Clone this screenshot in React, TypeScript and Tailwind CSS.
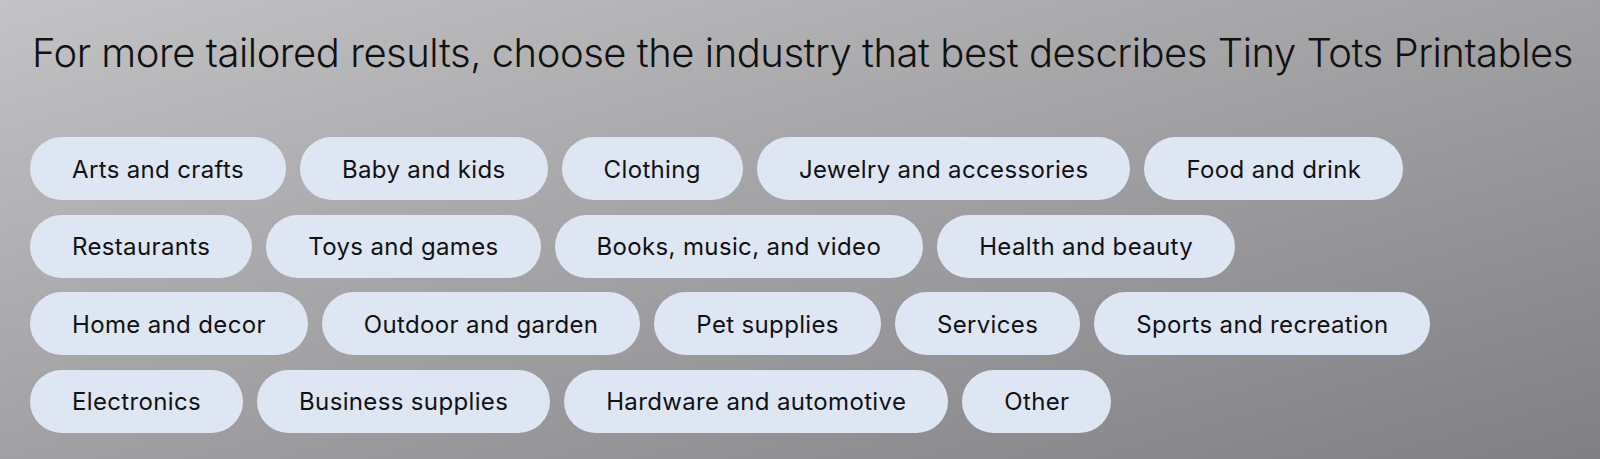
import React from "react";

const industries = [
  "Arts and crafts",
  "Baby and kids",
  "Clothing",
  "Jewelry and accessories",
  "Food and drink",
  "Restaurants",
  "Toys and games",
  "Books, music, and video",
  "Health and beauty",
  "Home and decor",
  "Outdoor and garden",
  "Pet supplies",
  "Services",
  "Sports and recreation",
  "Electronics",
  "Business supplies",
  "Hardware and automotive",
  "Other",
];

// rows are fixed so the wrapping stays put at this width
const rows = [
  industries.slice(0, 5),
  industries.slice(5, 9),
  industries.slice(9, 14),
  industries.slice(14),
];

export default function App() {
  return (
    <div className="h-[459px] w-full overflow-hidden bg-gradient-to-br from-[#c3c3c5] to-[#808084] px-[30px] pt-[27px] font-['Inter',sans-serif] text-[#111]">
      <h1 className="ml-[2px] text-[40px] leading-[52px] font-light tracking-[-0.48px] whitespace-nowrap">
        For more tailored results, choose the industry that best describes Tiny
        Tots Printables
      </h1>
      <div className="mt-[58px] flex flex-col gap-[14.5px]">
        {rows.map((row, i) => (
          <div key={i} className="flex gap-[14px]">
            {row.map((name) => (
              <button
                key={name}
                className="h-[63px] rounded-full bg-[#dfe6f3] px-[42px] pt-[2px] text-[24px] tracking-[0.35px] whitespace-nowrap"
              >
                {name}
              </button>
            ))}
          </div>
        ))}
      </div>
    </div>
  );
}
